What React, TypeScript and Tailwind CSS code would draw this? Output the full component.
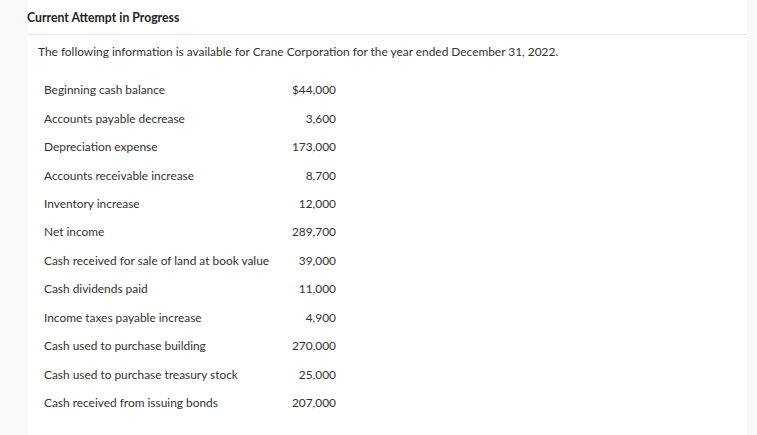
import React from 'react';

const rows: [string, string][] = [
  ['Beginning cash balance', '$44,000'],
  ['Accounts payable decrease', '3,600'],
  ['Depreciation expense', '173,000'],
  ['Accounts receivable increase', '8,700'],
  ['Inventory increase', '12,000'],
  ['Net income', '289,700'],
  ['Cash received for sale of land at book value', '39,000'],
  ['Cash dividends paid', '11,000'],
  ['Income taxes payable increase', '4,900'],
  ['Cash used to purchase building', '270,000'],
  ['Cash used to purchase treasury stock', '25,000'],
  ['Cash received from issuing bonds', '207,000'],
];

export default function App() {
  return (
    <div className="flex h-[435px] w-[757px] overflow-hidden bg-white text-[#333] font-['Lato','Liberation_Sans',sans-serif]">
      {/* left gutter */}
      <div className="w-[27px] shrink-0 bg-[#f9f9f9]" />

      <div className="flex-1 flex flex-col">
        <div className="h-[35px] flex items-center border-b border-[#e8e8e8] text-[12.25px] font-bold text-[#222] pt-[2px]">
          Current Attempt in Progress
        </div>

        <p className="pl-[11px] pt-[9px] text-[11.9px] leading-[16px]">
          The following information is available for Crane Corporation for the year ended December 31, 2022.
        </p>

        {/* data table */}
        <div className="pl-[17px] pt-[16px] text-[11.9px]">
          {rows.map(([label, value]) => (
            <div key={label} className="flex items-center h-[28.45px]">
              <div className="w-[232px]">{label}</div>
              <div className="w-[60px] text-right">{value}</div>
            </div>
          ))}
        </div>
      </div>

      {/* right gutter */}
      <div className="w-[10px] shrink-0 bg-[#f9f9f9]" />
    </div>
  );
}
